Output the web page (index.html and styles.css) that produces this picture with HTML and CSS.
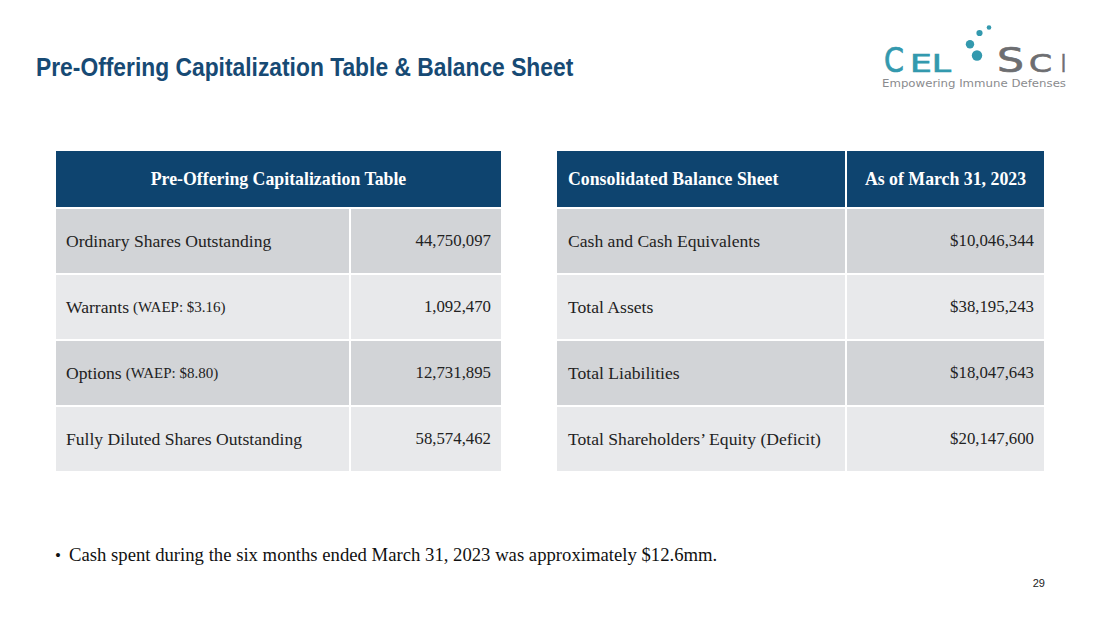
FILE: index.html
```html
<!DOCTYPE html>
<html lang="en">
<head>
<meta charset="utf-8">
<title>Pre-Offering Capitalization Table &amp; Balance Sheet</title>
<link rel="stylesheet" href="styles.css">
</head>
<body>
<div class="slide">
  <header class="top">
    <h1 class="title">Pre-Offering Capitalization Table &amp; Balance Sheet</h1>
    <svg class="logo" width="192" height="72" viewBox="0 0 192 72" aria-label="CEL-SCI Empowering Immune Defenses">
      <text class="lg-teal" x="6" y="52" font-size="33.5" textLength="20" lengthAdjust="spacingAndGlyphs">C</text>
      <text class="lg-teal" x="32" y="52" font-size="25" textLength="41" lengthAdjust="spacingAndGlyphs">EL</text>
      <circle class="dot" cx="111" cy="7.5" r="2.3"/>
      <circle class="dot" cx="101.5" cy="13" r="3.1"/>
      <circle class="dot" cx="92" cy="24.3" r="4.2"/>
      <circle class="dot" cx="99" cy="35.5" r="5.2"/>
      <text class="lg-gray" x="119" y="52" font-size="33.5" textLength="27" lengthAdjust="spacingAndGlyphs">S</text>
      <text class="lg-gray" x="151" y="52" font-size="25" textLength="23" lengthAdjust="spacingAndGlyphs">C</text>
      <text class="lg-gray" x="183" y="52" font-size="25" textLength="5" lengthAdjust="spacingAndGlyphs">I</text>
      <text class="lg-tag" x="4" y="67" font-size="10" textLength="184" lengthAdjust="spacingAndGlyphs">Empowering Immune Defenses</text>
    </svg>
  </header>

  <section class="tables">
    <div class="tbl tbl-left">
      <div class="th th-span">Pre-Offering Capitalization Table</div>
      <div class="td dark">Ordinary Shares Outstanding</div>
      <div class="td dark num">44,750,097</div>
      <div class="td light">Warrants <span class="small">(WAEP: $3.16)</span></div>
      <div class="td light num">1,092,470</div>
      <div class="td dark">Options <span class="small">(WAEP: $8.80)</span></div>
      <div class="td dark num">12,731,895</div>
      <div class="td light">Fully Diluted Shares Outstanding</div>
      <div class="td light num">58,574,462</div>
    </div>

    <div class="tbl tbl-right">
      <div class="th th-left">Consolidated Balance Sheet</div>
      <div class="th th-center">As of March 31, 2023</div>
      <div class="td dark">Cash and Cash Equivalents</div>
      <div class="td dark num">$10,046,344</div>
      <div class="td light">Total Assets</div>
      <div class="td light num">$38,195,243</div>
      <div class="td dark">Total Liabilities</div>
      <div class="td dark num">$18,047,643</div>
      <div class="td light">Total Shareholders’ Equity (Deficit)</div>
      <div class="td light num">$20,147,600</div>
    </div>
  </section>

  <ul class="notes">
    <li>Cash spent during the six months ended March 31, 2023 was approximately $12.6mm.</li>
  </ul>

  <footer class="pagenum">29</footer>
</div>
</body>
</html>
```

FILE: styles.css
```css
html, body {
  margin: 0;
  padding: 0;
  background: #ffffff;
}

.slide {
  width: 1100px;
  height: 619px;
  overflow: hidden;
  background: #ffffff;
  display: flex;
  flex-direction: column;
}

.top {
  height: 151px;
  box-sizing: border-box;
  display: flex;
  justify-content: space-between;
  align-items: flex-start;
  padding: 0 30px 0 36px;
}

.title {
  margin: 53px 0 0 0;
  font-family: "Liberation Sans", Arial, sans-serif;
  font-weight: bold;
  font-size: 25.5px;
  line-height: 28px;
  color: #174a74;
  white-space: nowrap;
  transform: scaleX(0.895);
  transform-origin: left center;
}

.logo {
  margin-top: 20px;
  display: block;
}

.lg-teal {
  fill: #3399ae;
  stroke: #3399ae;
  stroke-width: 0.7px;
  font-family: "DejaVu Sans", sans-serif;
}

.lg-gray {
  fill: #6d6e71;
  stroke: #6d6e71;
  stroke-width: 0.7px;
  font-family: "DejaVu Sans", sans-serif;
}

.dot {
  fill: #3399ae;
}

.lg-tag {
  fill: #8a8b8e;
  font-family: "DejaVu Sans", sans-serif;
}

.tables {
  display: flex;
  gap: 56px;
  padding-left: 56px;
}

.tbl {
  display: grid;
  gap: 2px;
  background: #ffffff;
  grid-template-rows: 56px repeat(4, 64px);
  font-family: "Liberation Serif", "Times New Roman", serif;
  font-size: 17.6px;
  color: #222222;
}

.tbl-left {
  width: 445px;
  grid-template-columns: 293px 150px;
}

.tbl-right {
  width: 487px;
  grid-template-columns: 288px 197px;
}

.th {
  background: #0e446f;
  color: #ffffff;
  font-weight: bold;
  font-size: 17.8px;
  display: flex;
  align-items: center;
}

.th-span {
  grid-column: 1 / 3;
  justify-content: center;
}

.th-left {
  padding-left: 11px;
}

.th-center {
  justify-content: center;
}

.td {
  display: flex;
  align-items: center;
  padding: 0 10px;
}

.td.num {
  justify-content: flex-end;
  font-size: 16.8px;
}

.tbl-right .td:not(.num) {
  padding-left: 11px;
}

.dark {
  background: #d2d4d7;
}

.light {
  background: #e8e9eb;
}

.small {
  font-size: 15px;
  margin-left: 4px;
}

.notes {
  list-style: none;
  margin: 73px 0 0 0;
  padding: 0 0 0 55px;
  font-family: "Liberation Serif", "Times New Roman", serif;
  font-size: 18.7px;
  line-height: 22px;
  color: #111111;
}

.notes li {
  display: flex;
  align-items: baseline;
}

.notes li::before {
  content: "•";
  width: 14px;
  font-size: 17px;
}

.pagenum {
  margin-top: 10px;
  padding-right: 55px;
  text-align: right;
  font-family: "Liberation Sans", Arial, sans-serif;
  font-size: 11px;
  line-height: 13px;
  color: #222222;
}
```
